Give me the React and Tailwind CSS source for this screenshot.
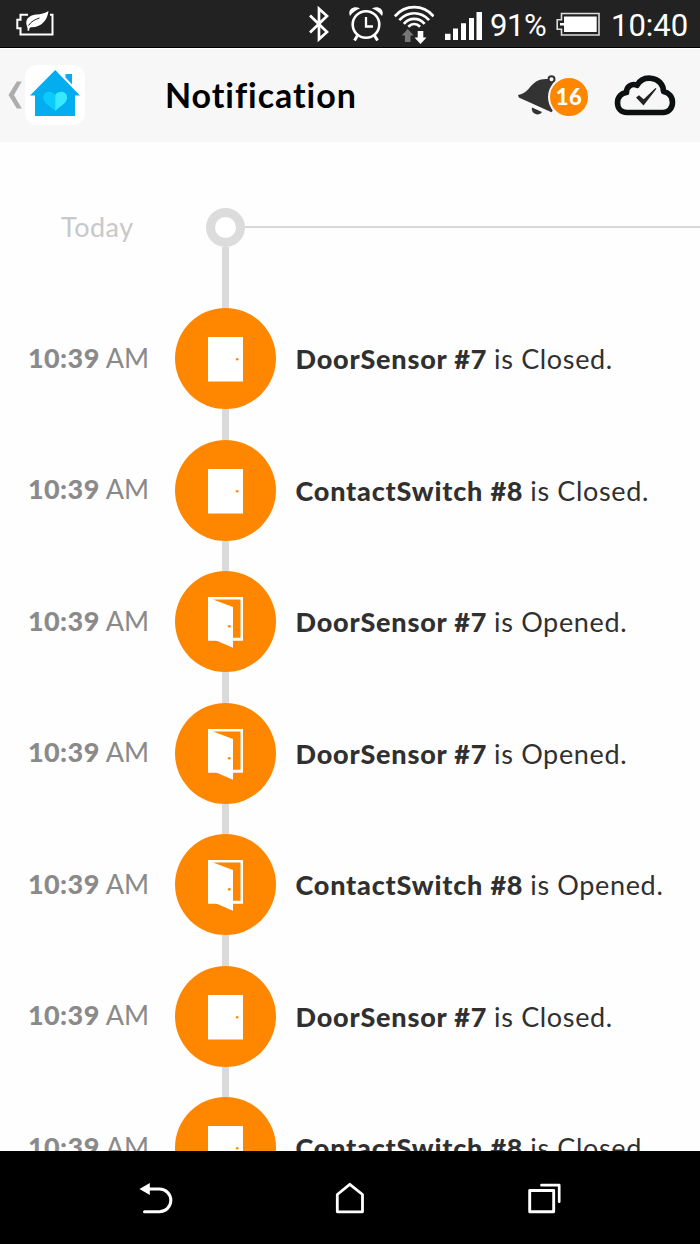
const events = [
    { id: 1, time: "10:39", period: "AM", device: "DoorSensor #7", state: "Closed" },
    { id: 2, time: "10:39", period: "AM", device: "ContactSwitch #8", state: "Closed" },
    { id: 3, time: "10:39", period: "AM", device: "DoorSensor #7", state: "Opened" },
    { id: 4, time: "10:39", period: "AM", device: "DoorSensor #7", state: "Opened" },
    { id: 5, time: "10:39", period: "AM", device: "ContactSwitch #8", state: "Opened" },
    { id: 6, time: "10:39", period: "AM", device: "DoorSensor #7", state: "Closed" },
    { id: 7, time: "10:39", period: "AM", device: "ContactSwitch #8", state: "Closed" },
];

const StatusBar = () => (
    <div className="h-12 shrink-0 flex items-center bg-[#222222] border-b border-black text-white font-['Roboto',sans-serif]">
        {/* power saver */}
        <svg className="ml-4 shrink-0" width="38" height="48" viewBox="16 0 38 48" fill="none">
            <path d="M28 14.700h-7.500v5H17.300v8.500h3.200v6.300h32V14.700h-2.500" stroke="#fff" strokeWidth="2" />
            <path d="M48.500 11C47.500 19 42.500 27.500 31 27.300c-1 0-1.700.7-1.900 3.500h-1.500c0-2-.1-3.600-.7-4.800C24.800 20 28.500 15.400 36 14.600c5-.5 9-1.300 12.500-3.600z" fill="#fff" />
            <path d="M28.500 25.500c2.500-4 6.500-6 11-7.500" stroke="#222" strokeWidth="1" />
        </svg>
        {/* bluetooth */}
        <svg className="ml-[254px] shrink-0" width="22" height="48" viewBox="308 0 22 48" fill="none">
            <path d="M310 15.500l17 16.500-8 7.300V8.700l8 7.300-17 16.500" stroke="#fff" strokeWidth="2.700" />
        </svg>
        {/* alarm */}
        <svg className="ml-[18px] shrink-0" width="36" height="48" viewBox="348 0 36 48" fill="none">
            <circle cx="366" cy="24.500" r="13.300" stroke="#fff" strokeWidth="2.600" />
            <path d="M366 17v9.500h7" stroke="#fff" strokeWidth="2.300" />
            <path d="M357.500 35.500l-3 5M374.500 35.500l3 5" stroke="#fff" strokeWidth="3" />
            <path d="M350 16c-3-6.500 4-11 10-7.500-4 1.500-7.500 4-10 7.500zM382 16c3-6.500-4-11-10-7.500 4 1.500 7.500 4 10 7.500z" fill="#fff" />
        </svg>
        {/* wifi */}
        <svg className="ml-[10px] shrink-0" width="40" height="48" viewBox="394 0 40 48" fill="none">
            <path d="M394.800 16.300c10.500-12.300 28.500-12.300 38.800 0M399.300 20.200c8.300-9.300 21.500-9.300 29.800 0M403.800 23.800c6-6.500 14.800-6.500 20.800 0M408.300 26.800c3.500-3.500 8.300-3.500 11.800 0" stroke="#fff" strokeWidth="2.700" />
            <path d="M407.700 29l6 6.500h-3.200v6.500h-5.600v-6.500h-3.200z" fill="#777" />
            <path d="M420.500 44l-6-6.500h3.200V31h5.600v6.500h3.200z" fill="#fff" />
        </svg>
        {/* signal */}
        <svg className="ml-[10px] shrink-0" width="40" height="48" viewBox="444 0 40 48" fill="#fff">
            <path d="M445 33.700h5.500V40H445zM453 28.500h5V40h-5zM461 23.300h5V40h-5zM469 18h5v22h-5zM476.500 12h5.500v28h-5.500z" />
        </svg>
        <span className="ml-[6px] w-[60px] text-[31px] leading-none tracking-[-0.4px] whitespace-nowrap pt-1">91%</span>
        <svg className="ml-[6px] shrink-0" width="45" height="48" viewBox="556 0 45 48" fill="none">
            <path d="M561.500 13.500H599v21.500h-37.500v-5.800h-4.300v-9.500h4.300z" stroke="#ddd" strokeWidth="1.600" />
            <path d="M564 16.500h32.700V32H564v-6.500h-4v-2.400h4z" fill="#fff" />
        </svg>
        <span className="ml-[10px] text-[31px] leading-none whitespace-nowrap pt-1">10:40</span>
    </div>
);

const Header = () => (
    <header className="h-[94px] shrink-0 flex items-center bg-[#f7f7f7] border-t border-white">
        <svg className="ml-2 -mt-px shrink-0" width="14" height="28" viewBox="8 81 14 28">
            <path d="M16.800 81.500h5L14 95l7.800 13.500h-5L8.500 95z" fill="#adadad" />
        </svg>
        <div className="ml-[3px] -mr-px -mt-[2px] w-[60px] h-[60px] shrink-0 rounded-xl bg-white">
            <svg width="60" height="60" viewBox="25 65 60 60">
                <path d="M55.200 70L80 95.500h-5V116H35V95.500h-5z" fill="#03adf0" />
                <path d="M65.500 74H72v10.500l-6.500-7z" fill="#03adf0" />
                <path d="M55.200 95c-3-5-11.900-4.200-11.900 2.500 0 5.500 6 8 11.900 13.500z" fill="#0bcbfd" />
                <path d="M55.200 95c3-5 11.900-4.200 11.900 2.500 0 5.500-6 8-11.900 13.500z" fill="#36e9ff" />
            </svg>
        </div>
        <h1 className="ml-[81px] -mt-px w-[199px] text-[34px] leading-none tracking-[0.95px] font-bold text-black whitespace-nowrap">Notification</h1>
        <div className="ml-[153px] flex items-center shrink-0">
            <svg width="42" height="44" viewBox="517 74 42 44" fill="none">
                <path d="M518 95c4-.8 7.500-2.500 10.500-6 6-7.800 11-10.500 19.500-10l5 4c-2.500 8-3 13-2.500 19l2.300 8.500-1.300 1.700-32.700-14.700z" fill="#333" />
                <circle cx="551.500" cy="79.200" r="3" stroke="#333" strokeWidth="2" fill="#f7f7f7" />
                <path d="M532 107.500l10 4.500c-1.500 2.500-4.500 3-7 1.800-2.500-1.200-3.700-3.500-3-6.300z" fill="#333" />
            </svg>
            <span className="-ml-[11px] mt-[2px] relative w-[42px] h-[42px] rounded-full border-2 border-[#f7f7f7] bg-[#ff8700] flex items-center justify-center text-white text-[22px] leading-none font-black tracking-[0.5px]">16</span>
        </div>
        <svg className="ml-[24px] shrink-0" width="62" height="44" viewBox="614 73 62 44" fill="none">
            <path d="M627 111.500c-6 0-9.500-4.500-9.500-9.800 0-5.700 4-9.700 9-10.200-.5-6 5.500-9.500 10.500-7.200 3-5.500 8-7.500 13.500-7.100 8 .5 13 6.500 13 13.300 5.500 1.200 9 5.500 9 11 0 5.700-4 10-9.500 10z" stroke="#0c1010" strokeWidth="5.600" strokeLinejoin="round" />
            <path d="M636 96.500l3-2.200 4.700 4L655.500 87l1 .8-13 16.700z" fill="#222" />
        </svg>
    </header>
);

const OpenDoor = () => (
    <svg className="-mt-[3px]" width="36" height="52" viewBox="0 0 36 52">
        <path d="M0 0h35v43.700H0z" fill="#fff" />
        <path d="M5 2.500h27.500v38.300H25V10z" fill="#ff8700" />
        <path d="M7 43L25 50.700V42H7z" fill="#fff" />
        <circle cx="21.300" cy="29.300" r="1.400" fill="#ff8700" />
    </svg>
);

const ClosedDoor = () => (
    <svg width="36" height="50" viewBox="0 0 36 50">
        <path d="M0 0h35v44.500H0z" fill="#fff" />
        <circle cx="29.200" cy="22.200" r="1.300" fill="#ff8700" />
    </svg>
);

const EventRow = ({ event }) => (
    <li className="flex h-[131.5px] shrink-0">
        <div className="w-[175px] shrink-0 pl-7 pt-[35.5px] text-[27px] leading-[28px] text-[#8a8a8a] whitespace-nowrap">
            <span className="font-black tracking-[0.4px]">{event.time}</span>{" "}
            <span className="font-normal">{event.period}</span>
        </div>
        <div className="w-[101px] shrink-0 flex flex-col items-center">
            <div className="w-[101px] h-[101px] shrink-0 rounded-full bg-[#ff8700] pl-[33px] pt-[29px]">
                {event.state === "Opened" ? <OpenDoor /> : <ClosedDoor />}
            </div>
            <div className="w-[7.5px] grow bg-[#dadadc]" />
        </div>
        <p className="ml-[19.5px] pt-[37px] text-[27px] leading-[28px] text-[#303030] whitespace-nowrap">
            <span className="font-black tracking-[0.8px]">{event.device}</span>{" "}
            <span className="tracking-[0.65px]">is {event.state}.</span>
        </p>
    </li>
);

const NavBar = () => (
    <nav className="h-[93px] shrink-0 flex items-center bg-black pt-[3px]">
        <svg className="ml-[138px]" width="36" height="34" viewBox="138 1181 36 34" fill="none">
            <path d="M148 1188h11.500a11.300 11.300 0 010 22.700h-15" stroke="#fff" strokeWidth="3" strokeLinecap="round" />
            <path d="M139.500 1188l10.300-6v12z" fill="#fff" />
        </svg>
        <svg className="ml-[160px]" width="32" height="34" viewBox="334 1181 32 34" fill="none">
            <path d="M337.300 1210.800v-17.300l12.500-10.200 12.700 10.200v17.300z" stroke="#fff" strokeWidth="2.800" strokeLinejoin="round" />
        </svg>
        <svg className="ml-[160px]" width="36" height="34" viewBox="526 1181 36 34" fill="none">
            <path d="M529.700 1189.500h24v21.300h-24z" stroke="#fff" strokeWidth="2.900" strokeLinejoin="round" />
            <path d="M541.500 1184.200h17.700v16.500" stroke="#fff" strokeWidth="2.700" strokeLinecap="round" strokeLinejoin="round" />
        </svg>
    </nav>
);

const App = () => {
    return (
        <div className="w-[700px] h-[1244px] flex flex-col overflow-hidden bg-black font-['Lato',sans-serif]">
            <StatusBar />
            <Header />
            <main className="h-[1008.5px] shrink-0 overflow-hidden bg-[#fefefe] pt-[66px]">
                <div className="flex h-[100.3px]">
                    <div className="w-[175px] shrink-0 pl-[61px] pt-[5px] text-[27px] leading-[28px] tracking-[0.5px] text-[#c8c8c8]">Today</div>
                    <div className="w-[101px] shrink-0 flex flex-col items-center">
                        <div className="w-[39px] h-[39px] shrink-0 rounded-full border-[9.5px] border-[#dcdcdc] bg-white" />
                        <div className="w-[7.5px] grow bg-[#dadadc]" />
                    </div>
                    <div className="-ml-[31px] mt-[18px] h-[2px] grow bg-[#d8d8d8]" />
                </div>
                <ul className="flex flex-col">
                    {events.map((event) => (
                        <EventRow key={event.id} event={event} />
                    ))}
                </ul>
            </main>
            <NavBar />
        </div>
    );
};
export default App;
